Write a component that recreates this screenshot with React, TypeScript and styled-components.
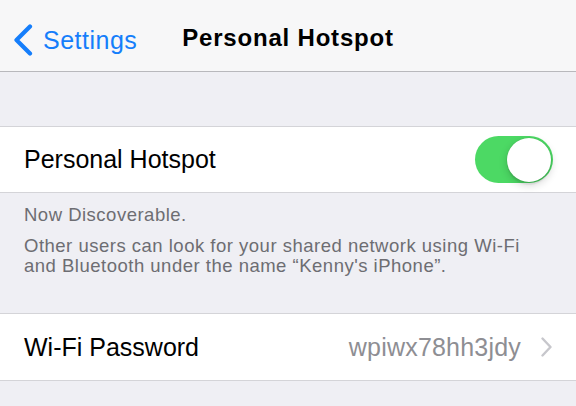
import React from "react";
import styled, { createGlobalStyle } from "styled-components";

const GlobalStyle = createGlobalStyle`
  html, body {
    margin: 0;
    padding: 0;
    background: #efeff4;
  }
  * { box-sizing: border-box; }
`;

const Screen = styled.div`
  width: 576px;
  height: 406px;
  overflow: hidden;
  background: #efeff4;
  font-family: "Liberation Sans", Arial, sans-serif;
  display: flex;
  flex-direction: column;
`;

const NavBar = styled.header`
  height: 72px;
  flex: none;
  background: #f7f7f8;
  border-bottom: 1px solid #b8b8bc;
  display: grid;
  grid-template-columns: 1fr auto 1fr;
  align-items: start;
  padding-top: 23px;
`;

const BackButton = styled.button`
  justify-self: start;
  display: flex;
  align-items: center;
  gap: 9px;
  border: 0;
  background: none;
  padding: 0 0 0 13px;
  margin: 0;
  color: #157efb;
  font-family: inherit;
  font-size: 25px;
  letter-spacing: 0.5px;
  line-height: 30px;
  cursor: pointer;
`;

const BackChevron = styled.svg`
  width: 21px;
  height: 32px;
  flex: none;
  margin-top: 1px;
`;

const Title = styled.h1`
  margin: 0;
  font-size: 24px;
  font-weight: 700;
  line-height: 30px;
  color: #000;
  letter-spacing: 0.8px;
`;

const Spacer = styled.div<{ $h: number }>`
  height: ${(p) => p.$h}px;
  flex: none;
`;

const Cell = styled.div<{ $h: number }>`
  height: ${(p) => p.$h}px;
  flex: none;
  background: #fff;
  border-top: 1px solid #d4d4d8;
  border-bottom: 1px solid #d4d4d8;
  display: flex;
  align-items: center;
  justify-content: space-between;
  padding: 0 23px 0 24px;
`;

const Label = styled.span`
  font-size: 25px;
  color: #000;
`;

const Detail = styled.div`
  display: flex;
  align-items: center;
  gap: 20px;
  padding-right: 1px;
`;

const Value = styled.span`
  font-size: 25px;
  color: #8e8e93;
  letter-spacing: 0.2px;
`;

const Disclosure = styled.svg`
  width: 11px;
  height: 20px;
  flex: none;
`;

const Toggle = styled.div<{ $on: boolean }>`
  width: 78px;
  height: 47px;
  border-radius: 24px;
  background: ${(p) => (p.$on ? "#4cd964" : "#e5e5ea")};
  display: flex;
  align-items: center;
  justify-content: ${(p) => (p.$on ? "flex-end" : "flex-start")};
  padding: 0 2px;
`;

const Knob = styled.div`
  width: 44px;
  height: 44px;
  border-radius: 50%;
  background: #fff;
  box-shadow: 0 0 0 0.5px rgba(0, 0, 0, 0.08), 0 3px 1px rgba(0, 0, 0, 0.06),
    0 3px 8px rgba(0, 0, 0, 0.18);
`;

const Footer = styled.div`
  height: 120px;
  flex: none;
  padding: 12px 24px 0 24px;
  color: #6d6d72;
  font-size: 18.5px;
  letter-spacing: 0.5px;
  line-height: 20px;
  display: flex;
  flex-direction: column;
  gap: 11px;
`;

const FooterText = styled.p`
  margin: 0;
`;

export default function App() {
  const [on, setOn] = React.useState(true);
  return (
    <>
      <GlobalStyle />
      <Screen>
        <NavBar>
          <BackButton>
            <BackChevron viewBox="0 0 21 32">
              <path
                d="M17 2.5 L3.5 16 L17 29.5"
                fill="none"
                stroke="#157efb"
                strokeWidth="4.2"
                strokeLinecap="round"
                strokeLinejoin="round"
              />
            </BackChevron>
            Settings
          </BackButton>
          <Title>Personal Hotspot</Title>
          <div />
        </NavBar>
        <Spacer $h={54} />
        <Cell $h={67}>
          <Label>Personal Hotspot</Label>
          <Toggle $on={on} onClick={() => setOn(!on)}>
            <Knob />
          </Toggle>
        </Cell>
        <Footer>
          <FooterText>Now Discoverable.</FooterText>
          <FooterText>
            Other users can look for your shared network using Wi-Fi
            <br />
            and Bluetooth under the name “Kenny's iPhone”.
          </FooterText>
        </Footer>
        <Cell $h={68}>
          <Label>Wi-Fi Password</Label>
          <Detail>
            <Value>wpiwx78hh3jdy</Value>
            <Disclosure viewBox="0 0 11 20">
              <path
                d="M1.5 1.5 L9.5 10 L1.5 18.5"
                fill="none"
                stroke="#c7c7cc"
                strokeWidth="2.4"
                strokeLinecap="round"
                strokeLinejoin="round"
              />
            </Disclosure>
          </Detail>
        </Cell>
      </Screen>
    </>
  );
}
